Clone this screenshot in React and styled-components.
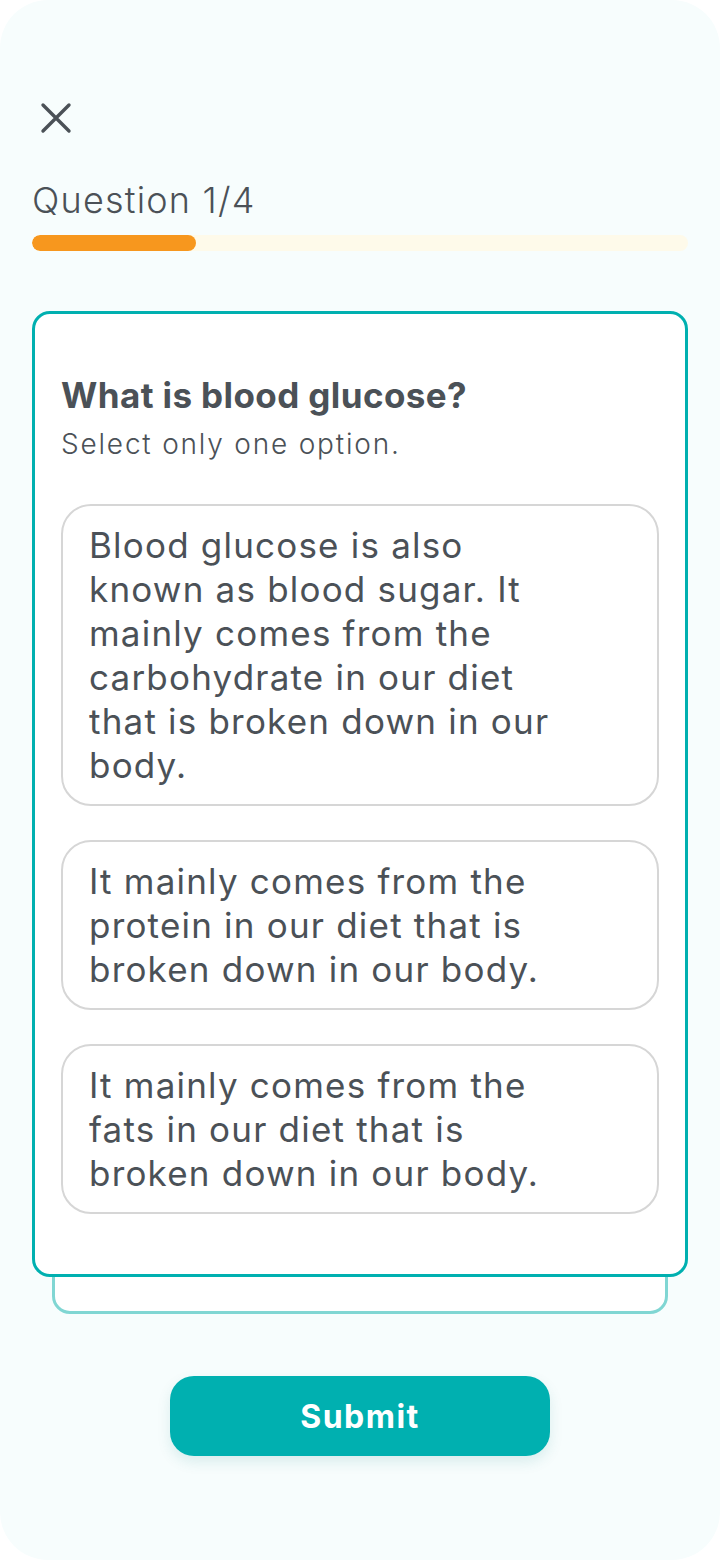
import styled, { createGlobalStyle } from "styled-components";

const GlobalStyle = createGlobalStyle`
  html, body {
    margin: 0;
    padding: 0;
    background: #ffffff;
  }
  * {
    box-sizing: border-box;
  }
`;

const options = [
  "Blood glucose is also known as blood sugar. It mainly comes from the carbohydrate in our diet that is broken down in our body.",
  "It mainly comes from the protein in our diet that is broken down in our body.",
  "It mainly comes from the fats in our diet that is broken down in our body.",
];

const App = () => {
  const current = 1;
  const total = 4;

  return (
    <>
      <GlobalStyle />
      <Screen>
        <CloseButton aria-label="Close">
          <svg width="34" height="34" viewBox="0 0 34 34" fill="none">
            <path
              d="M4 4 L30 30 M30 4 L4 30"
              stroke="#4b5157"
              strokeWidth="3.4"
              strokeLinecap="round"
            />
          </svg>
        </CloseButton>

        <Counter>
          Question {current}/{total}
        </Counter>
        <Track>
          <Fill style={{ width: `${(current / total) * 100}%` }} />
        </Track>

        <CardStack>
          <Card>
            <Title>What is blood glucose?</Title>
            <Hint>Select only one option.</Hint>
            <OptionList>
              {options.map((text) => (
                <Option key={text}>{text}</Option>
              ))}
            </OptionList>
          </Card>
        </CardStack>

        <SubmitButton>Submit</SubmitButton>
      </Screen>
    </>
  );
};

const Screen = styled.div`
  width: 720px;
  height: 1560px;
  border-radius: 48px;
  background: #f7fdfd;
  padding: 0 32px;
  display: flex;
  flex-direction: column;
  font-family: Inter, "Noto Sans", sans-serif;
  color: #4b5157;
`;

const CloseButton = styled.button`
  margin-top: 101px;
  margin-left: 7px;
  width: 34px;
  height: 34px;
  padding: 0;
  border: none;
  background: none;
  display: flex;
  cursor: pointer;
`;

const Counter = styled.div`
  margin-top: 44px;
  font-size: 36px;
  font-weight: 300;
  line-height: 42px;
  letter-spacing: 1.2px;
  color: #4b5157;
`;

const Track = styled.div`
  margin-top: 14px;
  height: 16px;
  border-radius: 8px;
  background: #fefaea;
  overflow: hidden;
`;

const Fill = styled.div`
  height: 100%;
  border-radius: 8px;
  background: #f7971e;
`;

const CardStack = styled.div`
  position: relative;
  margin-top: 60px;
  padding-bottom: 37px;

  &::before {
    content: "";
    position: absolute;
    left: 20px;
    right: 20px;
    bottom: 0;
    height: 120px;
    border: 3px solid #80d6d3;
    border-radius: 18px;
    background: #ffffff;
  }
`;

const Card = styled.div`
  position: relative;
  background: #ffffff;
  border: 3px solid #00b0b0;
  border-radius: 18px;
  padding: 60px 26px 60px;
`;

const Title = styled.h2`
  margin: 0;
  font-size: 35px;
  font-weight: 700;
  line-height: 42px;
  letter-spacing: 0.4px;
  color: #4b5157;
`;

const Hint = styled.p`
  margin: 11px 0 0;
  font-size: 28px;
  font-weight: 300;
  line-height: 34px;
  letter-spacing: 1.8px;
  color: #4b5157;
`;

const OptionList = styled.div`
  margin-top: 43px;
  display: flex;
  flex-direction: column;
  gap: 34px;
`;

const Option = styled.div`
  border: 2px solid #d6d6d6;
  border-radius: 30px;
  padding: 17px 94px 17px 26px;
  font-size: 35px;
  font-weight: 400;
  line-height: 44px;
  letter-spacing: 1.2px;
  color: #4b5157;
  cursor: pointer;
`;

const SubmitButton = styled.button`
  align-self: center;
  margin-top: 62px;
  width: 380px;
  height: 80px;
  border: none;
  border-radius: 24px;
  background: #00b0b0;
  box-shadow: 0 6px 14px rgba(0, 120, 120, 0.12);
  color: #ffffff;
  font-family: Inter, "Noto Sans", sans-serif;
  font-size: 32px;
  font-weight: 700;
  letter-spacing: 1.5px;
  cursor: pointer;
`;

export default App;
